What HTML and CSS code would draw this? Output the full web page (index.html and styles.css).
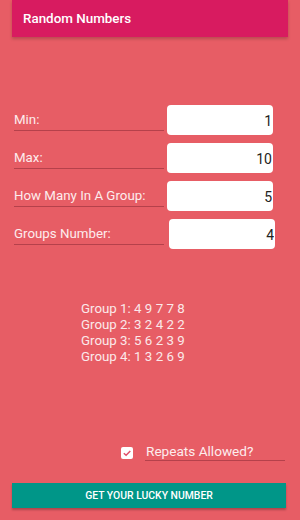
FILE: index.html
```html
<!DOCTYPE html>
<html lang="en">
<head>
    <meta charset="UTF-8">
    <meta name="viewport" content="width=device-width, initial-scale=1.0">
    <title>Random Numbers</title>
    <link rel="stylesheet" href="styles.css">
</head>
<body>
    <div class="app">
        <div class="toolbar">Random Numbers</div>

        <div class="form">
            <div class="row">
                <label class="field-label">Min:</label>
                <input class="field-input" type="text" value="1">
            </div>
            <div class="row">
                <label class="field-label">Max:</label>
                <input class="field-input" type="text" value="10">
            </div>
            <div class="row">
                <label class="field-label">How Many In A Group:</label>
                <input class="field-input" type="text" value="5">
            </div>
            <div class="row row-last">
                <label class="field-label">Groups Number:</label>
                <input class="field-input" type="text" value="4">
            </div>
        </div>

        <div class="groups">
            <div>Group 1: 4 9 7 7 8</div>
            <div>Group 2: 3 2 4 2 2</div>
            <div>Group 3: 5 6 2 3 9</div>
            <div>Group 4: 1 3 2 6 9</div>
        </div>

        <div class="repeats">
            <span class="check">
                <svg width="12" height="12" viewBox="0 0 12 12">
                    <path d="M2.8 6.2 L5.1 8.3 L9.3 4" fill="none" stroke="#e0506a" stroke-width="1.5"/>
                </svg>
            </span>
            <span class="repeats-label">Repeats Allowed?</span>
        </div>

        <button class="lucky">GET YOUR LUCKY NUMBER</button>
    </div>
</body>
</html>
```

FILE: styles.css
```css
* {
    box-sizing: border-box;
    margin: 0;
    padding: 0;
}

body {
    background-color: #e75d65;
    font-family: 'Roboto', 'Noto Sans', sans-serif;
    width: 300px;
    height: 520px;
    overflow: hidden;
}

.app {
    padding: 0 12px;
}

.toolbar {
    height: 37px;
    line-height: 38px;
    padding-left: 11px;
    background-color: #d81b60;
    color: #fff;
    font-size: 13.4px;
    font-weight: 500;
    box-shadow: 0 2px 3px rgba(0, 0, 0, 0.2);
}

.form {
    margin-top: 68px;
}

.row {
    display: flex;
    align-items: flex-end;
    height: 30px;
    margin-bottom: 8px;
}

.row-last {
    margin-bottom: 0;
}

.field-label {
    width: 150px;
    margin-left: 2px;
    margin-bottom: 4px;
    padding-bottom: 2px;
    border-bottom: 1px solid #b5414b;
    color: #fdeced;
    font-size: 13.3px;
    line-height: 16px;
}

.field-input {
    width: 106px;
    height: 30px;
    margin-left: 3px;
    border: none;
    border-radius: 4px;
    background: #fff;
    text-align: right;
    padding-right: 1px;
    padding-top: 2px;
    font-family: 'Roboto', sans-serif;
    font-size: 14px;
    color: #222;
    outline: none;
}

.row-last .field-input {
    margin-left: 5px;
}

.groups {
    margin-top: 52px;
    margin-left: 69px;
    color: #fbe9ea;
    font-size: 13.3px;
    line-height: 16px;
}

.repeats {
    display: flex;
    align-items: flex-end;
    margin-top: 78px;
    height: 18px;
}

.check {
    display: flex;
    width: 12px;
    height: 12px;
    margin-left: 109px;
    margin-bottom: 2px;
    background: #fff;
    border-radius: 2px;
}

.repeats-label {
    width: 140px;
    margin-left: 12px;
    padding-left: 1px;
    padding-bottom: 1px;
    border-bottom: 1px solid #b5414b;
    color: #fdeced;
    font-size: 13.6px;
    line-height: 16px;
}

.lucky {
    display: block;
    width: 274px;
    height: 25px;
    margin-top: 22px;
    border: none;
    background-color: #009688;
    color: #fff;
    font-family: 'Roboto', sans-serif;
    font-size: 10.4px;
    font-weight: 500;
    box-shadow: 0 2px 2px rgba(0, 0, 0, 0.25);
}
```
